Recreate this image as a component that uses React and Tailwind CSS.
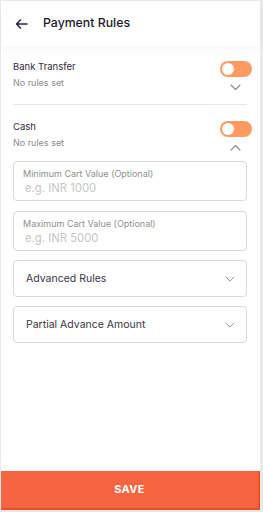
import React from 'react';

function Toggle() {
  return (
    <div className="w-[32px] h-[16px] rounded-full bg-[#ff9a63] flex items-center px-[2px]">
      <div className="w-[12px] h-[12px] rounded-full bg-white" />
    </div>
  );
}

function Chevron({ up }) {
  return (
    <svg width="11" height="7" viewBox="0 0 11 7" fill="none" className={up ? 'rotate-180' : ''}>
      <path d="M1 1l4.5 4.5L10 1" stroke="#8a8a8a" strokeWidth="1.1" strokeLinecap="round" strokeLinejoin="round" />
    </svg>
  );
}

function MethodRow({ name, up }) {
  return (
    <div className="flex justify-between">
      <div className="flex flex-col">
        <span className="text-[9.5px] leading-[11px] text-[#2f2a3a]">{name}</span>
        <span className="text-[9px] leading-[11px] text-[#8c8c8c] mt-[5px]">No rules set</span>
      </div>
      <div className="flex flex-col items-center w-[32px] -mr-[4px]">
        <Toggle />
        <div className="mt-[7px] -ml-[1px]">
          <Chevron up={up} />
        </div>
      </div>
    </div>
  );
}

function Field({ label, placeholder }) {
  return (
    <div className="h-[40px] border border-[#d9d9d9] rounded-[4px] px-[9px] pt-[6px] flex flex-col">
      <span className="text-[9px] leading-[11px] text-[#8f8f8f]">{label}</span>
      <span className="text-[11.3px] leading-[14px] text-[#c6c6c6] mt-[2px] ml-[2px]">{placeholder}</span>
    </div>
  );
}

function Select({ label }) {
  return (
    <div className="h-[37px] border border-[#d9d9d9] rounded-[4px] pl-[12px] pr-[11px] flex items-center justify-between">
      <span className="text-[10.5px] text-[#3a3545]">{label}</span>
      <svg width="10" height="6" viewBox="0 0 10 6" fill="none">
        <path d="M1 1l4 4 4-4" stroke="#9a9a9a" strokeWidth="1" strokeLinecap="round" strokeLinejoin="round" />
      </svg>
    </div>
  );
}

export default function App() {
  return (
    <div className="w-[263px] h-[512px] bg-[#e9e9e9] pt-px pl-px pr-[3px] pb-[2px] font-['Inter',sans-serif]">
      <div className="h-full bg-white flex flex-col">
        <div className="h-[45px] flex items-center pl-[14px] gap-[15px] relative z-10 shadow-[0_4px_8px_rgba(0,0,0,0.035)]">
          <svg width="13" height="10" viewBox="0 0 13 10" fill="none">
            <path d="M12 5H1.5M5.5 1L1.5 5l4 4" stroke="#2b2233" strokeWidth="1.5" strokeLinecap="round" strokeLinejoin="round" />
          </svg>
          <span className="text-[12.3px] font-medium text-[#1e1a2a]">Payment Rules</span>
        </div>
        <div className="flex-1 px-[12px] pt-[15px] flex flex-col">
          <MethodRow name="Bank Transfer" />
          <div className="h-px bg-[#e6e6e6] mt-[13px] mr-[1px]" />
          <div className="mt-[16px]">
            <MethodRow name="Cash" up />
          </div>
          <div className="flex flex-col gap-[10px] mt-[10px] mr-[1px]">
            <Field label="Minimum Cart Value (Optional)" placeholder="e.g. INR 1000" />
            <Field label="Maximum Cart Value (Optional)" placeholder="e.g. INR 5000" />
            <div className="flex flex-col gap-[9px] -mt-[1px]">
              <Select label="Advanced Rules" />
              <Select label="Partial Advance Amount" />
            </div>
          </div>
        </div>
        <button className="h-[39px] bg-[#f76540] border-b-[2px] border-r-[2px] border-[#f04e22] text-white text-[11px] font-bold tracking-[0.3px] flex items-center justify-center">
          SAVE
        </button>
      </div>
    </div>
  );
}
